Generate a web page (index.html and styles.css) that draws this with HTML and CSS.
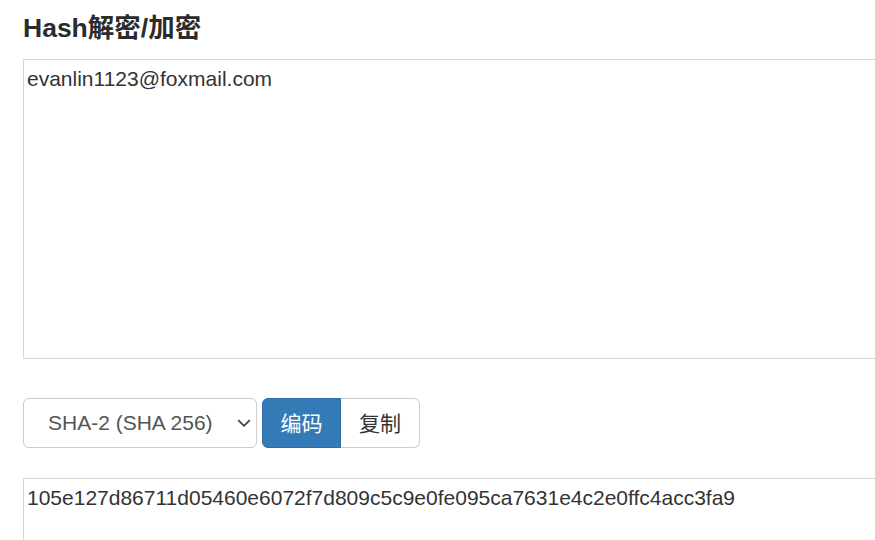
FILE: index.html
```html
<!DOCTYPE html>
<html lang="zh-CN">
<head>
<meta charset="utf-8">
<title>Hash解密/加密</title>
<link rel="stylesheet" href="styles.css">
</head>
<body>
<div class="page">
  <h4 class="title">Hash解密/加密</h4>
  <textarea class="field input-area">evanlin1123@foxmail.com</textarea>
  <div class="toolbar">
    <div class="select-wrap">
      <select class="algo">
        <option>SHA-2 (SHA 256)</option>
      </select>
      <svg class="chevron" width="14" height="8" viewBox="0 0 14 8"><path d="M1.2 1.2 L7 6.8 L12.8 1.2" fill="none" stroke="#444" stroke-width="1.8"/></svg>
    </div>
    <div class="btn-group">
      <button class="btn btn-primary">编码</button>
      <button class="btn btn-default">复制</button>
    </div>
  </div>
  <textarea class="field output-area">105e127d86711d05460e6072f7d809c5c9e0fe095ca7631e4c2e0ffc4acc3fa9</textarea>
</div>
</body>
</html>
```
FILE: styles.css
```css
html, body {
  margin: 0;
  padding: 0;
  overflow: hidden;
  background: #fff;
}
body {
  font-family: "Liberation Sans", Arial, "Noto Sans CJK SC", sans-serif;
  color: #333;
}
.page {
  box-sizing: border-box;
  padding-left: 23px;
  width: 100vw;
  height: 100vh;
  overflow: hidden;
}
.title {
  margin: 13px 0 16px;
  font-size: 26.5px;
  line-height: 30px;
  font-weight: bold;
  color: #2b2b2b;
}
.field {
  display: block;
  box-sizing: border-box;
  width: calc(100% + 20px);
  margin: 0;
  padding: 4px 3px;
  border: 1px solid #d6d6d6;
  border-radius: 0;
  font-family: "Liberation Sans", Arial, "Noto Sans CJK SC", sans-serif;
  font-size: 21px;
  line-height: 30px;
  color: #333;
  background: #fff;
  resize: none;
  outline: none;
}
.input-area {
  height: 300px;
}
.toolbar {
  display: flex;
  align-items: center;
  gap: 5px;
  margin: 38px 0 30px;
}
.select-wrap {
  position: relative;
  width: 234px;
  height: 50px;
}
.algo {
  -webkit-appearance: none;
  appearance: none;
  box-sizing: border-box;
  width: 100%;
  height: 100%;
  margin: 0;
  padding: 0 30px 0 24px;
  border: 1px solid #ccc;
  border-radius: 6px;
  background: #fff;
  font-family: "Liberation Sans", Arial, "Noto Sans CJK SC", sans-serif;
  font-size: 21px;
  color: #555;
  outline: none;
}
.chevron {
  position: absolute;
  right: 6px;
  top: 21px;
}
.btn-group {
  display: flex;
  height: 50px;
  margin-top: 1px;
}
.btn {
  box-sizing: border-box;
  height: 50px;
  width: 79px;
  margin: 0;
  padding: 0 0 2px;
  border: 1px solid #ccc;
  font-family: "Liberation Sans", Arial, "Noto Sans CJK SC", sans-serif;
  font-size: 21px;
  cursor: pointer;
}
.btn-primary {
  background: #337ab7;
  border-color: #2e6da4;
  color: #fff;
  border-radius: 6px 0 0 6px;
}
.btn-default {
  background: #fff;
  color: #333;
  border-left: 0;
  border-radius: 0 6px 6px 0;
}
.output-area {
  height: 100px;
}
```
